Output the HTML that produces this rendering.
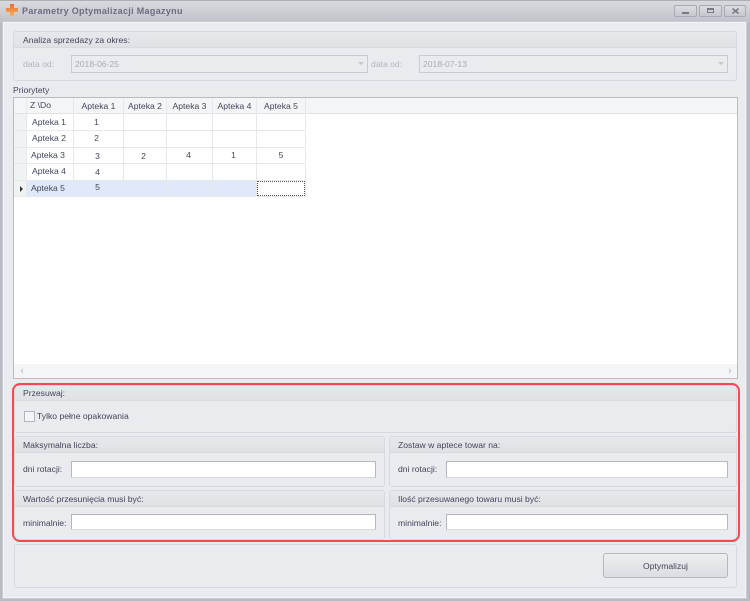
<!DOCTYPE html>
<html lang="pl"><head><meta charset="utf-8"><title>Parametry Optymalizacji Magazynu</title>
<style>
html,body{margin:0;padding:0}
body{width:750px;height:601px;overflow:hidden;position:relative;background:#b9bbc3;font-family:"Liberation Sans",sans-serif;font-size:8.6px;color:#414659}
div{position:absolute;box-sizing:border-box;white-space:nowrap}
.grp{background:#e9ebef;border:1px solid #d6d8dd;border-radius:3px}
.hd{left:0;right:0;top:0;background:linear-gradient(#e7e8ec,#dfe1e5);border-bottom:1px solid #d8dade;border-radius:2px 2px 0 0}
.t{line-height:12px;height:12px}
.in{background:#fff;border:1px solid #b4b6c2;border-bottom-color:#d8d9e0}
.cmb{background:#e9ebef;border:1px solid #c9cbd0;height:18px}
.d{color:#b3b5bd}
.c{position:absolute;text-align:center;line-height:16px;height:16px;color:#414659}
.l{background:#e6e8ec}
.arr{width:0;height:0;border-left:3px solid transparent;border-right:3px solid transparent;border-top:3px solid #c5c7cc}
.wb{top:5px;height:12px;border:1px solid #a9abb4;border-radius:2px;background:linear-gradient(#dcdde1,#c5c7cd)}
</style></head><body>
<div style="left:0;top:0;width:750px;height:23px;background:linear-gradient(#d9dadf,#bfc1c8);border-top:1px solid #aeb0b8"></div>
<svg style="position:absolute;left:5px;top:3px" width="14" height="14" viewBox="0 0 14 14"><defs><linearGradient id="g" x1="0" y1="0" x2="0" y2="1"><stop offset="0" stop-color="#ec6a32"/><stop offset="1" stop-color="#f9b35c"/></linearGradient></defs><path d="M5 1h4v4h4v4H9v4H5V9H1V5h4z" fill="url(#g)"/></svg>
<div class="t" style="left:22px;top:5px;font-weight:bold;color:#6a6d7e;font-size:9px;letter-spacing:.32px">Parametry Optymalizacji Magazynu</div>
<div class="wb" style="left:674px;width:23px"><div style="left:7px;top:6px;width:7px;height:2px;background:#777a86"></div></div>
<div class="wb" style="left:699px;width:23px"><div style="left:7px;top:2px;width:7px;height:5px;border:1px solid #777a86;border-top-width:2px"></div></div>
<div class="wb" style="left:724px;width:22px"><svg style="position:absolute;left:7px;top:2px" width="7" height="6" viewBox="0 0 7 6"><path d="M.5 .5L6.500 5.500M6.500 .5L.5 5.500" stroke="#777a86" stroke-width="1.500"/></svg></div>

<div style="left:3px;top:22px;width:743px;height:576px;background:#e9ebef;border:1px solid #f3f4f6;outline:1px solid #c9cbd2"></div>

<div class="grp" style="left:13px;top:31px;width:724px;height:50px"><div class="hd" style="height:16px"></div></div>
<div class="t" style="left:23px;top:34px">Analiza sprzedazy za okres:</div>
<div class="t d" style="left:23px;top:58px">data od:</div>
<div class="cmb" style="left:71px;top:55px;width:297px"></div>
<div class="t d" style="left:75px;top:58px;color:#a9abb3">2018-06-25</div>
<div class="arr" style="left:358px;top:62px"></div>
<div class="t d" style="left:371px;top:58px">data od:</div>
<div class="cmb" style="left:419px;top:55px;width:309px"></div>
<div class="t d" style="left:423px;top:58px;color:#a9abb3">2018-07-13</div>
<div class="arr" style="left:718px;top:62px"></div>

<div class="t" style="left:13px;top:84px">Priorytety</div>
<div style="left:13px;top:97px;width:725px;height:282px;background:#fff;border:1px solid #b9bbc2"></div>
<div style="left:14px;top:98px;width:723px;height:16px;background:#f4f5f6;border-bottom:1px solid #e2e3e8"></div>
<div style="left:14px;top:364px;width:723px;height:14px;background:#f4f5f7"></div>
<div style="left:20px;top:368px;width:0;height:0;border-top:3px solid transparent;border-bottom:3px solid transparent;border-right:3px solid #d5d6da"></div>
<div style="left:729px;top:368px;width:0;height:0;border-top:3px solid transparent;border-bottom:3px solid transparent;border-left:3px solid #d5d6da"></div>

<div style="left:14px;top:114px;width:12px;height:83px;background:#f1f2f4"></div>
<div style="left:26px;top:180px;width:231px;height:17px;background:#e0e9fa"></div>
<div class="l" style="left:26px;top:98px;width:1px;height:99px"></div>
<div class="l" style="left:73px;top:98px;width:1px;height:99px"></div>
<div class="l" style="left:123px;top:98px;width:1px;height:99px"></div>
<div class="l" style="left:166px;top:98px;width:1px;height:99px"></div>
<div class="l" style="left:212px;top:98px;width:1px;height:99px"></div>
<div class="l" style="left:256px;top:98px;width:1px;height:99px"></div>
<div class="l" style="left:305px;top:98px;width:1px;height:99px"></div>
<div class="l" style="left:14px;top:130px;width:292px;height:1px"></div>
<div class="l" style="left:14px;top:147px;width:292px;height:1px"></div>
<div class="l" style="left:14px;top:163px;width:292px;height:1px"></div>
<div class="l" style="left:14px;top:180px;width:292px;height:1px"></div>
<div class="l" style="left:14px;top:196px;width:292px;height:1px"></div>
<div style="left:257px;top:181px;width:48px;height:15px;background:#fff;border:1px dotted #555"></div>
<div style="left:20px;top:186px;width:0;height:0;border-top:3px solid transparent;border-bottom:3px solid transparent;border-left:3px solid #333"></div>

<div class="c" style="left:30px;top:97px">Z \Do</div>
<div class="c" style="left:74px;top:98px;width:49px">Apteka 1</div>
<div class="c" style="left:124px;top:98px;width:42px">Apteka 2</div>
<div class="c" style="left:167px;top:98px;width:45px">Apteka 3</div>
<div class="c" style="left:213px;top:98px;width:43px">Apteka 4</div>
<div class="c" style="left:257px;top:98px;width:48px">Apteka 5</div>

<div class="c" style="left:26px;top:114px;width:46px">Apteka 1</div><div class="c" style="left:74px;top:114px;width:45px">1</div>
<div class="c" style="left:26px;top:130px;width:46px">Apteka 2</div><div class="c" style="left:74px;top:130px;width:45px">2</div>
<div class="c" style="left:25px;top:147px;width:46px">Apteka 3</div><div class="c" style="left:74px;top:148px;width:47px">3</div>
<div class="c" style="left:124px;top:148px;width:39px">2</div><div class="c" style="left:167px;top:147px;width:43px">4</div><div class="c" style="left:213px;top:147px;width:41px">1</div><div class="c" style="left:257px;top:147px;width:48px">5</div>
<div class="c" style="left:26px;top:163px;width:46px">Apteka 4</div><div class="c" style="left:74px;top:164px;width:47px">4</div>
<div class="c" style="left:25px;top:180px;width:46px">Apteka 5</div><div class="c" style="left:74px;top:179px;width:47px">5</div>

<div class="grp" style="left:14px;top:385px;width:723px;height:48px"><div class="hd" style="height:15px"></div></div>
<div class="t" style="left:23px;top:387px">Przesuwaj:</div>
<div style="left:24px;top:411px;width:11px;height:11px;background:#f3f4f6;border:1.500px solid #b5b6bd"></div>
<div class="t" style="left:37px;top:410px">Tylko pełne opakowania</div>

<div class="grp" style="left:14px;top:436px;width:371px;height:51px"><div class="hd" style="height:16px"></div></div>
<div class="t" style="left:23px;top:439px">Maksymalna liczba:</div>
<div class="t" style="left:23px;top:463px">dni rotacji:</div>
<div class="in" style="left:71px;top:461px;width:305px;height:17px"></div>

<div class="grp" style="left:389px;top:436px;width:348px;height:51px"><div class="hd" style="height:16px"></div></div>
<div class="t" style="left:398px;top:439px">Zostaw w aptece towar na:</div>
<div class="t" style="left:398px;top:463px">dni rotacji:</div>
<div class="in" style="left:446px;top:461px;width:282px;height:17px"></div>

<div class="grp" style="left:14px;top:490px;width:371px;height:50px"><div class="hd" style="height:16px"></div></div>
<div class="t" style="left:23px;top:493px">Wartość przesunięcia musi być:</div>
<div class="t" style="left:23px;top:517px">minimalnie:</div>
<div class="in" style="left:71px;top:514px;width:305px;height:16px"></div>

<div class="grp" style="left:389px;top:490px;width:348px;height:50px"><div class="hd" style="height:16px"></div></div>
<div class="t" style="left:398px;top:493px">Ilość przesuwanego towaru musi być:</div>
<div class="t" style="left:398px;top:517px">minimalnie:</div>
<div class="in" style="left:446px;top:514px;width:282px;height:16px"></div>

<div style="left:12px;top:383px;width:728px;height:159px;border:2px solid #f5494f;border-radius:8px"></div>

<div class="grp" style="left:14px;top:544px;width:723px;height:44px"></div>
<div style="left:603px;top:553px;width:125px;height:25px;border:1px solid #b5b7be;border-radius:3px;background:linear-gradient(#eceef0,#dcdde2);text-align:center;line-height:24px">Optymalizuj</div>
</body></html>
